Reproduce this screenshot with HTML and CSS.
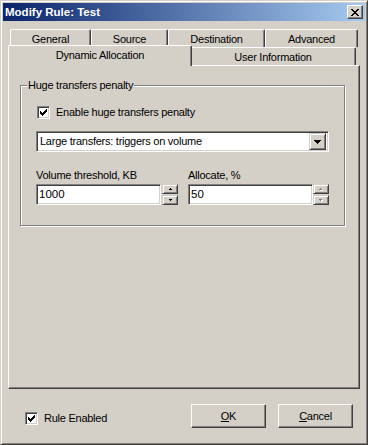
FILE: index.html
```html
<!DOCTYPE html>
<html>
<head>
<meta charset="utf-8">
<title>Modify Rule: Test</title>
<link rel="stylesheet" href="styles.css">
</head>
<body>
<div class="window">
  <div class="caption">
    <span class="title">Modify Rule: Test</span>
    <span class="close">
      <svg width="8" height="7" viewBox="0 0 8 7" shape-rendering="crispEdges"><path d="M0 0h2v1h-2zM6 0h2v1h-2zM1 1h2v1h-2zM5 1h2v1h-2zM2 2h4v1h-4zM3 3h2v1h-2zM2 4h4v1h-4zM1 5h2v1h-2zM5 5h2v1h-2zM0 6h2v1h-2zM6 6h2v1h-2z" fill="#000"/></svg>
    </span>
  </div>
  <div class="client">
    <div class="tabs">
      <div class="tabrow">
        <div class="tab w-general">General</div>
        <div class="tab w-source">Source</div>
        <div class="tab w-dest">Destination</div>
        <div class="tab w-adv">Advanced</div>
      </div>
      <div class="tabrow">
        <div class="tab w-dyn selected">Dynamic Allocation</div>
        <div class="tab w-user">User Information</div>
      </div>
    </div>
    <div class="panel">
      <div class="group">
        <span class="legend">Huge transfers penalty</span>
        <div class="chkrow">
          <span class="checkbox">
            <svg width="7" height="7" viewBox="0 0 7 7" shape-rendering="crispEdges"><path d="M0 2h1v3h-1zM1 3h1v3h-1zM2 4h1v3h-1zM3 3h1v3h-1zM4 2h1v3h-1zM5 1h1v3h-1zM6 0h1v3h-1z" fill="#000"/></svg>
          </span>
          <span class="label">Enable huge transfers penalty</span>
        </div>
        <div class="combo">
          <span class="combo-text">Large transfers: triggers on volume</span>
          <span class="combo-btn">
            <svg width="7" height="4" viewBox="0 0 7 4" shape-rendering="crispEdges"><path d="M0 0h7v1h-7zM1 1h5v1h-5zM2 2h3v1h-3zM3 3h1v1h-1z" fill="#000"/></svg>
          </span>
        </div>
        <div class="fields">
          <div class="field">
            <span class="label">Volume threshold, KB</span>
            <div class="editrow">
              <span class="edit w-vol">1000</span>
              <span class="spin">
                <span class="spinbtn"><svg width="3" height="2" viewBox="0 0 3 2" shape-rendering="crispEdges"><path d="M1 0h1v1h-1zM0 1h3v1h-3z" fill="#000"/></svg></span>
                <span class="spinbtn"><svg width="3" height="2" viewBox="0 0 3 2" shape-rendering="crispEdges"><path d="M0 0h3v1h-3zM1 1h1v1h-1z" fill="#000"/></svg></span>
              </span>
            </div>
          </div>
          <div class="field">
            <span class="label">Allocate, %</span>
            <div class="editrow">
              <span class="edit w-alloc">50</span>
              <span class="spin">
                <span class="spinbtn"><svg width="4" height="3" viewBox="0 0 4 3" shape-rendering="crispEdges"><path d="M2 1h1v1h-1zM1 2h3v1h-3z" fill="#fff"/><path d="M1 0h1v1h-1zM0 1h3v1h-3z" fill="#808080"/></svg></span>
                <span class="spinbtn"><svg width="4" height="3" viewBox="0 0 4 3" shape-rendering="crispEdges"><path d="M1 1h3v1h-3zM2 2h1v1h-1z" fill="#fff"/><path d="M0 0h3v1h-3zM1 1h1v1h-1z" fill="#808080"/></svg></span>
              </span>
            </div>
          </div>
        </div>
      </div>
    </div>
    <div class="footer">
      <div class="chkrow footer-chk">
        <span class="checkbox">
          <svg width="7" height="7" viewBox="0 0 7 7" shape-rendering="crispEdges"><path d="M0 2h1v3h-1zM1 3h1v3h-1zM2 4h1v3h-1zM3 3h1v3h-1zM4 2h1v3h-1zM5 1h1v3h-1zM6 0h1v3h-1z" fill="#000"/></svg>
        </span>
        <span class="label">Rule Enabled</span>
      </div>
      <div class="buttons">
        <span class="button"><u>O</u>K</span>
        <span class="button"><u>C</u>ancel</span>
      </div>
    </div>
  </div>
</div>
</body>
</html>
```
FILE: styles.css
```css
html, body {
  margin: 0;
  padding: 0;
  background: #D4D0C8;
}
body {
  font-family: "Liberation Sans", Arial, sans-serif;
  font-size: 11px;
  letter-spacing: -0.25px;
  color: #000;
}
.window {
  width: 368px;
  height: 445px;
  box-sizing: border-box;
  background: #D4D0C8;
  border: 1px solid;
  border-color: #D4D0C8 #404040 #404040 #D4D0C8;
  box-shadow: inset 1px 1px 0 #fff, inset -1px -1px 0 #808080;
  padding: 2px;
  display: flex;
  flex-direction: column;
}
.caption {
  height: 18px;
  flex: none;
  display: flex;
  align-items: center;
  justify-content: space-between;
  background: linear-gradient(to right, #0A246A, #A6CAF0);
}
.title {
  color: #fff;
  font-weight: bold;
  font-size: 11.5px;
  letter-spacing: 0;
  padding-left: 2px;
  line-height: 18px;
}
.close {
  width: 16px;
  height: 14px;
  box-sizing: border-box;
  margin-right: 2px;
  background: #D4D0C8;
  border: 1px solid;
  border-color: #fff #404040 #404040 #fff;
  box-shadow: inset -1px -1px 0 #808080;
  display: flex;
  align-items: center;
  justify-content: center;
  padding-right: 1px;
}
.close svg { display: block; }
.client {
  flex: 1;
  padding: 8px 5px 0 5px;
  display: flex;
  flex-direction: column;
}
.tabs {
  display: flex;
  flex-direction: column;
}
.tabrow {
  display: flex;
  height: 18px;
  margin: 0 2px;
  align-items: flex-start;
}
.tab {
  height: 18px;
  box-sizing: border-box;
  background: #D4D0C8;
  border-top: 1px solid #fff;
  border-left: 1px solid #fff;
  border-right: 1px solid #404040;
  border-top-left-radius: 2px;
  border-top-right-radius: 2px;
  box-shadow: inset -1px 0 0 #808080;
  text-align: center;
  line-height: 13px;
  padding-top: 3px;
  white-space: nowrap;
}
.tab.selected {
  height: 21px;
  margin: -2px -2px 0 -2px;
  position: relative;
  z-index: 2;
}
.w-general { width: 81px; }
.w-source { width: 77px; }
.w-dest { width: 97px; }
.w-adv { width: 93px; }
.w-dyn { width: 184px; }
.w-user { width: 166px; margin-left: 0; }
.panel {
  height: 324px;
  box-sizing: border-box;
  border-top: 1px solid #fff;
  border-left: 1px solid #fff;
  border-right: 1px solid #404040;
  border-bottom: 1px solid #404040;
  box-shadow: inset -1px -1px 0 #808080;
  position: relative;
  z-index: 1;
  padding: 19px 0 0 11px;
}
.group {
  position: relative;
  width: 325px;
  height: 141px;
  box-sizing: border-box;
  border: 1px solid #808080;
  box-shadow: inset 1px 1px 0 #fff, 1px 1px 0 #fff;
  display: flex;
  flex-direction: column;
}
.legend {
  position: absolute;
  top: -7px;
  left: 6px;
  padding: 0 1px;
  background: #D4D0C8;
  line-height: 13px;
}
.chkrow {
  display: flex;
  align-items: center;
  height: 13px;
}
.group .chkrow {
  margin-top: 20px;
  padding-left: 16px;
}
.checkbox {
  width: 13px;
  height: 13px;
  flex: none;
  box-sizing: border-box;
  background: #fff;
  border: 1px solid;
  border-color: #808080 #fff #fff #808080;
  box-shadow: inset 1px 1px 0 #404040, inset -1px -1px 0 #D4D0C8;
  display: flex;
  align-items: center;
  justify-content: center;
  margin-right: 6px;
}
.checkbox svg { display: block; }
.label {
  line-height: 13px;
  white-space: nowrap;
}
.combo {
  margin: 12px 0 0 15px;
  width: 293px;
  height: 21px;
  box-sizing: border-box;
  background: #fff;
  border: 1px solid;
  border-color: #808080 #fff #fff #808080;
  box-shadow: inset 1px 1px 0 #404040, inset -1px -1px 0 #D4D0C8;
  display: flex;
  align-items: center;
  padding: 1px 2px 1px 3px;
}
.combo-text {
  flex: 1;
  line-height: 13px;
  white-space: nowrap;
}
.combo-btn {
  width: 17px;
  height: 17px;
  box-sizing: border-box;
  background: #D4D0C8;
  border: 1px solid;
  border-color: #D4D0C8 #404040 #404040 #D4D0C8;
  box-shadow: inset 1px 1px 0 #fff, inset -1px -1px 0 #808080;
  display: flex;
  align-items: center;
  justify-content: center;
}
.combo-btn svg { display: block; }
.fields {
  display: flex;
  margin: 17px 0 0 15px;
  gap: 10px;
}
.field {
  display: flex;
  flex-direction: column;
  gap: 2px;
}
.editrow {
  display: flex;
  align-items: flex-start;
}
.edit {
  height: 21px;
  box-sizing: border-box;
  background: #fff;
  border: 1px solid;
  border-color: #808080 #fff #fff #808080;
  box-shadow: inset 1px 1px 0 #404040, inset -1px -1px 0 #D4D0C8;
  padding: 3px 2px 0 2px;
  line-height: 13px;
  font-size: 11.5px;
  letter-spacing: 0;
}
.w-vol { width: 125px; margin-right: 1px; }
.w-alloc { width: 125px; }
.spin {
  display: flex;
  flex-direction: column;
  width: 16px;
}
.spinbtn {
  height: 10px;
  box-sizing: border-box;
  background: #D4D0C8;
  border: 1px solid;
  border-color: #D4D0C8 #404040 #404040 #D4D0C8;
  box-shadow: inset 1px 1px 0 #fff, inset -1px -1px 0 #808080;
  display: flex;
  align-items: center;
  justify-content: center;
}
.spinbtn + .spinbtn { margin-top: 1px; }
.spinbtn svg { display: block; }
.footer {
  flex: 1;
  display: flex;
  justify-content: space-between;
  align-items: flex-start;
  padding: 0 7px 0 17px;
}
.footer-chk {
  margin-top: 23px;
}
.buttons {
  display: flex;
  gap: 12px;
  margin-top: 15px;
}
.button {
  width: 75px;
  height: 24px;
  box-sizing: border-box;
  background: #D4D0C8;
  border: 1px solid;
  border-color: #fff #404040 #404040 #fff;
  box-shadow: inset -1px -1px 0 #808080;
  display: flex;
  align-items: center;
  justify-content: center;
  line-height: 13px;
}
```
